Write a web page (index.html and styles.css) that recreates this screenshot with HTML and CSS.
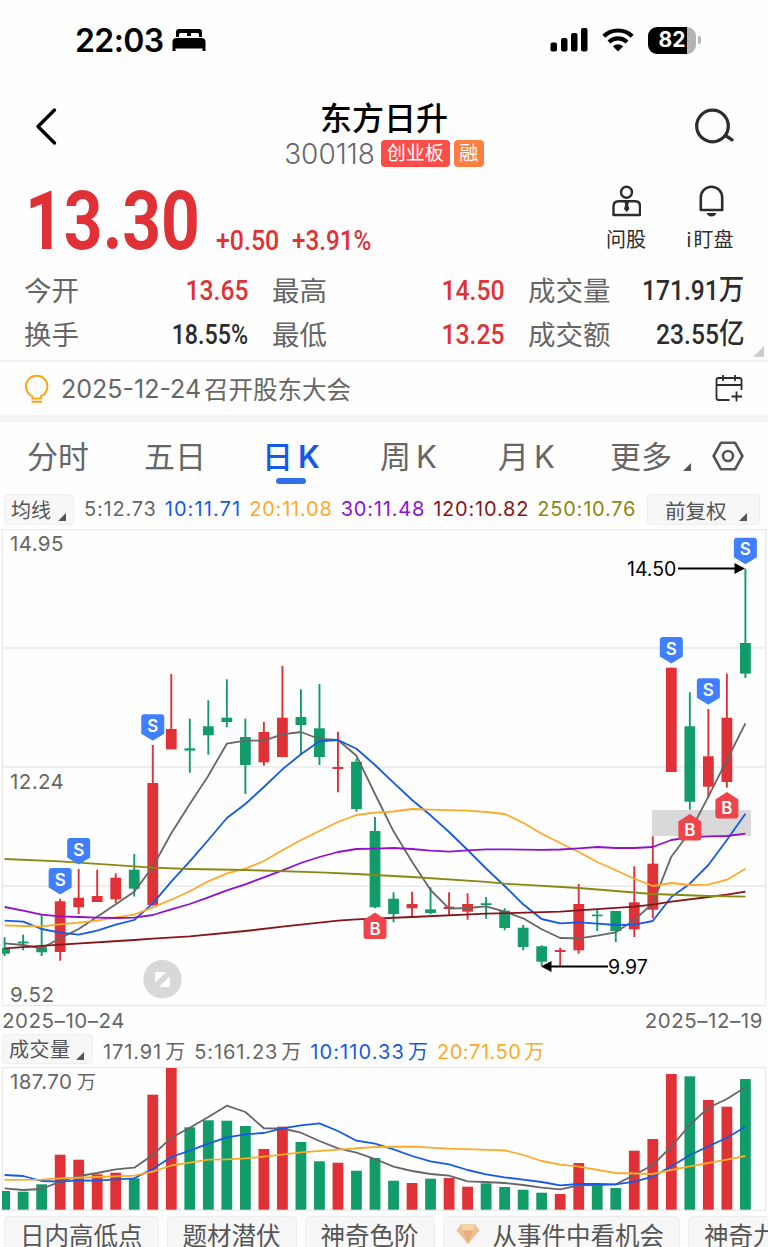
FILE: index.html
```html
<!DOCTYPE html>
<html lang="zh-CN">
<head>
  <meta charset="UTF-8" />
  <title>东方日升 300118</title>
  <meta name="viewport" content="width=device-width, initial-scale=1.0" />
  <link rel="stylesheet" href="styles.css">
</head>
<body>
  <div class="status-bar">
    <span class="time">22:03</span>
    <svg class="bed" width="34" height="24" viewBox="0 0 34 24">
      <path d="M4 9V4q0-3 3-3h20q3 0 3 3v5h-3V6.500q0-1.500-1.500-1.500h-6.500V8h-4V5H8.500q-1.500 0-1.500 1.500V9z" />
      <path d="M.5 23V14q0-4 4-4h25q4 0 4 4v9h-3v-2.500h-27V23z" />
    </svg>
    <div class="status-right">
      <svg width="38" height="24" viewBox="0 0 38 24">
        <rect x="0.500" y="14.500" width="6.500" height="9" rx="2" />
        <rect x="11" y="10" width="6.500" height="13.500" rx="2" />
        <rect x="21" y="5" width="6.500" height="18.500" rx="2" />
        <rect x="31" y="0" width="6.500" height="23.500" rx="2" />
      </svg>
      <svg class="wifi" width="32" height="24" viewBox="0 0 32 24">
        <path d="M1.800 8.300a20.300 20.300 0 0 1 28.400 0M7 14a12.800 12.800 0 0 1 18 0" fill="none" stroke="#000" stroke-width="4.200" />
        <path d="M16 23.500l-5.200-5.300q5.200-3.800 10.400 0z" />
      </svg>
      <div class="battery"><span>82</span></div>
      <i class="battery-tip"></i>
    </div>
  </div>

  <div class="header">
    <svg class="back" width="24" height="40" viewBox="0 0 24 40"><path d="M20.500 3L4 19.500 20.500 36" fill="none" stroke="#000" stroke-width="3.400" stroke-linecap="round" stroke-linejoin="round" /></svg>
    <div class="title">
      <h1>东方日升</h1>
      <div class="code-row">
        <span class="code">300118</span>
        <span class="tag tag-red">创业板</span>
        <span class="tag tag-orange">融</span>
      </div>
    </div>
    <svg class="search" width="40" height="36" viewBox="0 0 40 36"><g fill="none" stroke="#2d2d2d" stroke-width="3.300" stroke-linecap="round"><circle cx="18.500" cy="18" r="15.800" /><path d="M31.500 27.500l6.500 4.300" /></g></svg>
  </div>

  <div class="price-row">
    <div class="price">13.30</div>
    <div class="change change-value">+0.50</div>
    <div class="change change-pct">+3.91%</div>
    <div class="action action-ask">
      <svg width="30" height="32" viewBox="0 0 30 32"><g fill="none" stroke="#2d2d2d" stroke-width="2.400"><circle cx="15.500" cy="7.200" r="5.500" /><path d="M7.500 16.200h16.500q5 0 5 5v8.800h-26.500v-8.800q0-5 5-5z" stroke-linejoin="round" /></g><path d="M13.500 17h4.500l-.8 3 1.200 4-2.700 3-2.700-3 1.200-4z" fill="#2d2d2d" /></svg>
      <span>问股</span>
    </div>
    <div class="action action-watch">
      <svg width="30" height="32" viewBox="0 0 30 32"><path d="M5.800 25V12.500a10.700 10.700 0 0 1 21.400 0V25z" fill="none" stroke="#2d2d2d" stroke-width="2.600" stroke-linejoin="round" /><path d="M11.500 28h10q-1.500 3.600-5 3.600t-5-3.600z" fill="#2d2d2d" /></svg>
      <span><i>i</i>盯盘</span>
    </div>
  </div>

  <div class="quote">
    <span class="label">今开</span><span class="num red">13.65</span>
    <span class="label inset">最高</span><span class="num red">14.50</span>
    <span class="label inset">成交量</span><span class="num">171.91<b>万</b></span>
    <span class="label">换手</span><span class="num pct">18.55%</span>
    <span class="label inset">最低</span><span class="num red">13.25</span>
    <span class="label inset">成交额</span><span class="num">23.55<b>亿</b></span>
    <i class="corner"></i>
  </div>

  <div class="notice">
    <svg width="26" height="30" viewBox="0 0 26 30"><path d="M8.300 24.500v-2.300a10.700 10.700 0 1 1 8.800 0v2.300zM7.500 27.700h10.500" fill="none" stroke="#f9a411" stroke-width="1.900" stroke-linejoin="round" /></svg>
    <span class="notice-date">2025-12-24</span><span class="notice-text">召开股东大会</span>
    <svg class="calendar" width="28" height="28" viewBox="0 0 28 28"><path d="M14.500 25H3.500q-2 0-2-2V5q0-2 2-2h21q2 0 2 2v10M1.500 10h25M8 0v6M20 0v6M21.500 16.500v10M16.500 21.500h10.500" fill="none" stroke="#2d2d2d" stroke-width="1.800" /></svg>
  </div>

  <div class="tabs">
    <span>分时</span>
    <span>五日</span>
    <span class="active">日<em>K</em></span>
    <span>周<em>K</em></span>
    <span>月<em>K</em></span>
    <span class="more">更多</span>
    <i class="tri"></i>
    <svg width="32" height="30" viewBox="0 0 32 30"><g fill="none" stroke="#555" stroke-width="2.600" stroke-linejoin="round"><path d="M9 1.700h14L30.400 15 23 28.300H9L1.600 15z" /><circle cx="16" cy="15" r="5" /></g></svg>
  </div>

  <div class="ma-bar">
    <span class="pill pill-ma">均线<i class="tri"></i></span>
    <div class="ma-list">
      <span class="c5">5:12.73</span>
      <span class="c10">10:11.71</span>
      <span class="c20">20:11.08</span>
      <span class="c30">30:11.48</span>
      <span class="c120">120:10.82</span>
      <span class="c250">250:10.76</span>
    </div>
    <span class="pill pill-fq">前复权<i class="tri"></i></span>
  </div>

  <svg id="k-chart" class="chart" width="768" height="478" viewBox="0 529 768 478"></svg>
  <div class="dates"><span>2025–10–24</span><span>2025–12–19</span></div>

  <div class="vol-bar">
    <span class="pill pill-vol">成交量<i class="tri"></i></span>
    <span class="c5">171.91<u>万</u></span>
    <span class="c5">5:161.23<u>万</u></span>
    <span class="c10">10:110.33<u>万</u></span>
    <span class="c20">20:71.50<u>万</u></span>
  </div>
  <svg id="vol-chart" class="chart" width="768" height="145" viewBox="0 1067 768 145"></svg>

  <div class="chips">
    <span>日内高低点</span>
    <span>题材潜伏</span>
    <span>神奇色阶</span>
    <span class="chip-event"><svg width="24" height="20" viewBox="0 0 24 20"><path d="M5 0h14l4.500 6.500L12 20 .5 6.500z" fill="#efc092" /><path d="M5 0h14l-2 6.500H7z" fill="#f7d3ab" /><path d="M7 6.500h10L12 20z" fill="#e5ae7c" /></svg>从事件中看机会</span>
    <span>神奇九转</span>
  </div>

  <script>
    const RED = "#e03236", GREEN = "#129c6a";
    const COLORS = { ma5: "#666", ma10: "#145ae6", ma20: "#fdaa29", ma30: "#9011cc", ma120: "#861518", ma250: "#888911" };
    const x = i => 4.6 + i * 18.52;

    // direction, high, body top, body bottom, low
    const candles = [
      ["g", 937.3, 948, 953.7, 956], ["g", 934.7, 941.6, 943.4, 950.3], ["g", 915, 947.3, 952.3, 956],
      ["r", 898.7, 901.3, 952, 960.7], ["r", 869, 897.7, 907.3, 914], ["r", 869.7, 896, 902, 902],
      ["r", 873.3, 877.7, 899.3, 903], ["g", 854, 869.7, 888.7, 896.5], ["r", 745, 783, 905, 905.7],
      ["r", 674, 729, 749.3, 749.3], ["g", 718.7, 748.3, 750.6, 772.7], ["g", 700.3, 726.3, 735.3, 754.7],
      ["g", 679.3, 717.7, 722, 727.3], ["g", 718.7, 737, 765, 794], ["r", 722, 732, 762.3, 765.7],
      ["r", 666, 717.7, 757, 757], ["g", 689.3, 717, 725, 755], ["g", 684, 728.3, 757, 765],
      ["r", 731.7, 767, 769, 792.3], ["g", 758.3, 761.7, 809, 811.7], ["g", 817, 831, 907.3, 908.3],
      ["g", 892.3, 898.7, 914, 922.3], ["r", 891.7, 904, 908.3, 916.7], ["g", 887.3, 909.3, 913, 914.3],
      ["r", 892.3, 906.7, 909, 915.3], ["r", 893.3, 904, 911.7, 919.7], ["g", 897, 903.2, 905, 918.8],
      ["g", 908.3, 910.7, 928, 930.3], ["g", 925, 927.7, 947, 950.3], ["g", 945.3, 946.3, 961.7, 966],
      ["r", 947.7, 950, 952, 966], ["r", 884, 904, 950.3, 953.7], ["g", 909.3, 914.6, 916.2, 931],
      ["g", 911, 911, 931, 942], ["r", 866.3, 902.3, 929.3, 937], ["r", 836.3, 863.7, 909.7, 918.3],
      ["r", 667.7, 667.7, 772, 772], ["g", 692.3, 726.3, 801.7, 809.7], ["r", 709, 756.3, 786.7, 798],
      ["r", 673.7, 717.7, 782, 787.7], ["g", 568.7, 643, 673.7, 678]
    ];
    // [index, y] pairs are used where the line runs straight over several days
    const lines = {
      ma5: [943.3, 945, 948.3, 938.3, 929, 916.7, 904.3, 891.7, 866.7, 833.3, 804, 775.7, 743.7, 740.7, 740.7, 734.3, 732, 739, 740, 755.7, 794, 831.3, 861.7, 890, 908.7, 908, 906.3, 911.7, 918.3, 929.3, 938, 938.3, 935.7, 932.3, 920, 903.3, 856.7, 832, 796.7, 760, 723.3],
      ma10: [920.7, 921.7, 929, 932.7, 934.7, 930.7, 924.7, 920, 903.3, 881.7, 861.3, 840, 818, 804, 787, 769.3, 754.3, 741.3, 740, 748.7, 765, 782.7, 800, 815.3, 832, 850, 868.5, 886, 904.3, 919, 923.3, 922.3, 923.7, 925, 924.7, 921, 897, 883.7, 865, 840, 813.7],
      ma20: [925.3, 926, 926.3, 924.3, 922.7, 920.7, 917.3, 914.7, 907.3, 899.7, 891.3, 881.3, 873.3, 868.7, 861, 850.3, 840, 831, 822, 815, 812.7, 811.5, 809, 809.7, 810.2, 810.7, 812, 814, 822.7, 833.7, 843, 852, 862, 870.3, 878.7, 886, 883, 885, 884.7, 879.7, 868.7],
      ma30: [907, 910.7, 914.7, 916.3, 917, 917.7, 918, 917.7, 915, 909.3, 904, 897.3, 890.3, 884.3, 877.3, 870.3, 863, 857, 852, 849, 848.7, 848, 849, 850.7, 851.7, 850.3, 849.3, 849.3, 849.7, 849.8, 849.5, 848.3, 847, 848, 848, 847, 840, 837.3, 836.3, 836, 833.7],
      ma120: [[0, 948.3], [3, 944.7], [7, 940], [8, 938.7], [10, 936.3], [13, 931], [15, 926.7], [18, 920.7], [19, 919.3], [22, 917], [26, 913.7], [30, 911.7], [34, 906.7], [35, 904.7], [36, 901.7], [38, 897], [39, 894.7], [40, 891.7]],
      ma250: [[0, 859], [3, 861.3], [8, 867.7], [10, 869], [13, 870], [17, 872.3], [19, 874], [22, 877], [26, 881.9], [27, 883.7], [31, 888], [35, 894], [38, 896], [40, 896.7]]
    };
    const volTops = [1191, 1191.7, 1184.3, 1154.7, 1159.7, 1174.3, 1172.7, 1178.3, 1094.7, 1068, 1127.3, 1120.3, 1120.7, 1126, 1149, 1126.7, 1142, 1161.3, 1162.7, 1170.7, 1158, 1180.7, 1183, 1178.7, 1178, 1186.7, 1183.3, 1187, 1189.7, 1192.7, 1194, 1163, 1185, 1188, 1150.7, 1139, 1074, 1076.3, 1100, 1106.7, 1079];
    const volLines = {
      ma5: [1188.3, 1190, 1189, 1181.7, 1176, 1173, 1169.3, 1167.7, 1155, 1137.7, 1127.7, 1117, 1105.7, 1112, 1128.3, 1128.5, 1132.7, 1141, 1148.3, 1152.7, 1159, 1166.7, 1171, 1174, 1175.7, 1181.3, 1182, 1183, 1185, 1187.7, 1189.3, 1185.3, 1185, 1184.3, 1175, 1165, 1146.7, 1125, 1107.7, 1099, 1087.3],
      ma10: [1175, 1176, 1181, 1181.7, 1180.3, 1180.7, 1179.3, 1178.3, 1169, 1157, 1150.7, 1143.7, 1137.3, 1134.3, 1133, 1128.3, 1125.3, 1123.3, 1131, 1140.7, 1143.7, 1149.3, 1156, 1161.3, 1164.3, 1170, 1174.3, 1177.3, 1179.7, 1182, 1185.3, 1184, 1184, 1184.3, 1181.7, 1176.7, 1166.3, 1155.3, 1146.3, 1137.7, 1126.7],
      ma20: [[0, 1179.9], [2, 1179.7], [3, 1178.3], [5, 1177], [7, 1175.7], [8, 1171.7], [9, 1165.5], [10, 1162.7], [11, 1159.7], [12, 1159.3], [13, 1158.3], [14, 1156.7], [15, 1154.7], [16, 1152.3], [18, 1149.7], [20, 1147], [22, 1146.7], [24, 1148.7], [27, 1150.3], [28, 1155], [29, 1161], [30, 1164.7], [31, 1166.7], [33, 1173], [35, 1174], [36, 1170], [37, 1166.3], [38, 1163], [39, 1159.7], [40, 1156]]
    };

    const grid = (ys, top, bottom) =>
      `<path d="M2.500 ${top}V${bottom}M765.500 ${top}V${bottom}${ys.map(y => `M2 ${y}H766`).join("")}" class="grid" />`;
    const polyline = (name, data) => {
      const pts = data.map((p, i) => Array.isArray(p) ? `${x(p[0])},${p[1]}` : `${x(i)},${p}`);
      return `<polyline points="${pts.join(" ")}" stroke="${COLORS[name]}" class="line" />`;
    };
    const bar = (i, top, bottom, w, fill) => {
      const left = Math.max(x(i) - w / 2, 2);
      return `<rect x="${left}" y="${top}" width="${x(i) + w / 2 - left}" height="${bottom - top}" fill="${fill}" />`;
    };
    const sell = (i, y) => `<g transform="translate(${x(i)} ${y})"><path d="M-8.500 0H8.500Q11.500 0 11.500 3V19.500L0 26.500-11.500 19.500V3Q-11.500 0-8.500 0z" fill="#407fff" /><text y="17.500" class="mark">S</text></g>`;
    const buy = (i, y) => `<g transform="translate(${x(i)} ${y})"><path d="M0 0L11.500 7.500V23.500Q11.500 26.500 8.500 26.500H-8.500Q-11.500 26.500-11.500 23.500V7.500z" fill="#ed454b" /><text y="22" class="mark">B</text></g>`;

    let k = grid([529.5, 648, 767, 886, 1005.5], 529, 1006);
    k += `<rect x="652" y="810" width="99" height="26" fill="#d9d9d9" />`;
    candles.forEach(([dir, high, top, bottom, low], i) => {
      const fill = dir === "r" ? RED : GREEN;
      k += bar(i, high, low, 1.9, fill) + bar(i, top, bottom, 10.8, fill);
    });
    for (const name in lines) k += polyline(name, lines[name]);
    k += sell(3, 868) + sell(4, 838) + sell(8, 714.3) + sell(36, 637) + sell(38, 678.3) + sell(40, 537.7);
    k += buy(20, 912.5) + buy(37, 814) + buy(39, 792);
    k += `<text x="10" y="551" class="axis">14.95</text><text x="10" y="789" class="axis">12.24</text><text x="10" y="1002" class="axis">9.52</text>`;
    k += `<path d="M678 568.500H737M550 966.500H608" stroke="#000" stroke-width="2" /><path d="M745 568.500l-10.500-5.500v11zM541 966.500l10.500-5.500v11z" />`;
    k += `<text x="627" y="576" class="peak">14.50</text><text x="608" y="974" class="peak">9.97</text>`;
    k += `<circle cx="162.500" cy="979.300" r="19.200" fill="#d8d8d8" /><path d="M155.500 982V973.500Q155.500 972.500 156.500 972.500H165zM169.500 977V985.500Q169.500 986.500 168.500 986.500H160z" fill="#fff" stroke="#fff" stroke-linejoin="round" />`;
    document.getElementById("k-chart").innerHTML = k;

    let v = grid([1067.5, 1210.3], 1067, 1211);
    volTops.forEach((top, i) => { v += bar(i, top, 1209.7, 10.8, candles[i][0] === "r" ? RED : GREEN); });
    for (const name in volLines) v += polyline(name, volLines[name]);
    v += `<text x="10" y="1089" class="axis">187.70</text><text x="77" y="1089" class="axis cjk">万</text>`;
    document.getElementById("vol-chart").innerHTML = v;
  </script>
</body>
</html>
```
FILE: styles.css
```css
* {
  box-sizing: border-box;
  margin: 0;
  padding: 0;
}
body {
  width: 768px;
  height: 1247px;
  overflow: hidden;
  background: #fefefe;
  color: #2d2d2d;
  font-family: Inter, "Noto Sans CJK SC", sans-serif;
  white-space: nowrap;
}
svg {
  display: block;
  flex: none;
}
i, em {
  font-style: normal;
}
u {
  text-decoration: none;
}

/* status bar */
.status-bar {
  height: 80px;
  display: flex;
  align-items: center;
  padding: 0 67px 0 75px;
}
.time {
  width: 97px;
  font-size: 32px;
  font-weight: 600;
  letter-spacing: -0.6px;
  color: #000;
}
.status-right {
  margin-left: auto;
  display: flex;
  align-items: center;
}
.wifi {
  margin: 0 14px 0 14px;
}
.battery {
  width: 48px;
  height: 27px;
  border-radius: 9px;
  background: linear-gradient(90deg, #000 82%, #b3b3b3 82%);
  color: #fff;
  font-size: 21px;
  font-weight: 700;
  line-height: 26px;
  text-align: center;
}
.battery-tip {
  width: 3px;
  height: 8px;
  margin-left: 2px;
  border-radius: 0 3px 3px 0;
  background: #b3b3b3;
}

/* header */
.header {
  height: 95px;
  display: flex;
  padding: 0 34px;
}
.back {
  margin-top: 27px;
}
.title {
  flex: 1;
  text-align: center;
  padding-top: 16px;
}
.title h1 {
  height: 44px;
  padding-left: 16px;
  font-size: 32px;
  font-weight: 500;
  line-height: 46px;
  color: #000;
}
.code-row {
  display: flex;
  justify-content: center;
  align-items: center;
  height: 27px;
  padding-left: 16px;
}
.code {
  font-size: 28px;
  font-weight: 300;
  color: #666;
  margin-right: 6px;
}
.tag {
  height: 27px;
  padding: 0 5px;
  border-radius: 4px;
  color: #fff;
  font-size: 19px;
  line-height: 28px;
}
.tag-red {
  width: 69px;
  margin-right: 4px;
  background: #fc4d49;
}
.tag-orange {
  width: 30px;
  background: #ff7f41;
}
.search {
  margin-top: 28px;
}

/* price */
.price-row {
  height: 87px;
  display: flex;
  padding-left: 25px;
  color: #e03236;
  font-family: Roboto, sans-serif;
  font-weight: 700;
}
.price {
  width: 191px;
  font-size: 82px;
  line-height: 93px;
  transform: scaleX(0.825);
  transform-origin: 0 0;
}
.change {
  width: 76px;
  padding-top: 51px;
  font-size: 28px;
  line-height: 30px;
  font-weight: 500;
  transform: scaleX(0.89);
  transform-origin: 0 0;
}
.change-pct {
  width: 299px;
  transform: scaleX(0.865);
}
.action {
  display: flex;
  flex-direction: column;
  align-items: center;
  padding-top: 10px;
  color: #2d2d2d;
  font: 400 20px/32px Inter, "Noto Sans CJK SC", sans-serif;
}
.action-ask {
  width: 70px;
}
.action-watch {
  width: 98px;
}
.action span {
  margin-top: 7px;
}
.action i {
  margin-right: 2px;
}

/* quote grid */
.quote {
  position: relative;
  height: 100px;
  display: grid;
  grid-template-columns: 100px 124px 136px 120px 120px 120px;
  grid-template-rows: 44px 44px;
  padding: 7px 24px 0 24px;
  line-height: 44px;
  border-bottom: 2px solid #f1f1f1;
}
.label {
  font-size: 27.500px;
  color: #666;
}
.inset {
  padding-left: 24px;
}
.num {
  justify-self: end;
  font-family: Roboto, "Noto Sans CJK SC", sans-serif;
  font-size: 28px;
  font-weight: 500;
  transform: scaleX(0.88);
  transform-origin: 100% 0;
}
.pct {
  transform: scaleX(0.83);
}
.num b {
  display: inline-block;
  font-size: 29px;
  font-weight: 500;
  line-height: 30px;
}
.red {
  color: #e03236;
}
.corner {
  position: absolute;
  right: 4px;
  bottom: 3px;
  border-left: 11px solid transparent;
  border-bottom: 11px solid #ccc;
}

/* notice */
.notice {
  height: 60px;
  display: flex;
  align-items: center;
  padding: 0 25px 0 24px;
  border-bottom: 7px solid #f4f4f4;
  color: #666;
}
.notice-date {
  margin-left: 11px;
  width: 143px;
  font-size: 25px;
}
.notice-text {
  font-size: 24.5px;
}
.calendar {
  margin-left: auto;
}

/* tabs */
.tabs {
  height: 71px;
  display: flex;
  align-items: center;
  padding: 0 0 4px 27px;
  font-size: 31px;
  color: #666;
}
.tabs span {
  width: 118px;
  margin-top: -2px;
}
.tabs span:first-child {
  width: 117px;
}
.tabs em {
  margin-left: 5px;
  font-size: 31px;
}
.tabs .active {
  position: relative;
  color: #145ae6;
  font-weight: 500;
}
.active em {
  font-weight: 600;
}
.active::after {
  content: "";
  position: absolute;
  left: 14px;
  bottom: -7px;
  width: 30px;
  height: 6px;
  border-radius: 3px;
  background: #3170ea;
}
.tabs .more {
  width: 73px;
  margin-left: -6px;
}
.tri {
  width: 0;
  border-left: 8px solid transparent;
  border-bottom: 8px solid #555;
}
.tabs .tri {
  margin: 22px 21px 0 0;
}

/* moving average bar */
.pill {
  display: flex;
  align-items: center;
  border: 1px solid #eee;
  border-radius: 4px;
  background: #f7f7f7;
  color: #555;
}
.pill .tri {
  margin-top: 14px;
}
.ma-bar {
  height: 36px;
  display: flex;
  align-items: center;
  padding: 0 8px 3px 4px;
}
.pill-ma {
  width: 70px;
  height: 31px;
  padding-left: 6px;
  font-size: 20px;
}
.pill-ma .tri {
  margin-left: 7px;
}
.ma-list {
  display: flex;
  gap: 8px;
  margin: -1px 0 0 10px;
  font-size: 20px;
  letter-spacing: 0.8px;
}
.ma-list .c10 {
  letter-spacing: 1.1px;
}
.pill-fq {
  width: 113px;
  height: 31px;
  margin-left: auto;
  padding-left: 17px;
  font-size: 20.500px;
}
.pill-fq .tri {
  margin-left: 12px;
}
.c5 {
  color: #666;
}
.c10 {
  color: #145ae6;
}
.c20 {
  color: #fdaa29;
}
.c30 {
  color: #9011cc;
}
.c120 {
  color: #861518;
}
.c250 {
  color: #888911;
}

/* charts */
.grid {
  fill: none;
  stroke: #e9e9e9;
  stroke-width: 1.300;
}
.line {
  fill: none;
  stroke-width: 1.800;
  stroke-linejoin: round;
}
.mark {
  fill: #fff;
  font-size: 17px;
  font-weight: 600;
  text-anchor: middle;
}
.axis {
  fill: #666;
  font-size: 20.500px;
  letter-spacing: 0.4px;
}
.peak {
  fill: #000;
  font-size: 19.500px;
}
.cjk {
  font-size: 19px;
}
.dates {
  height: 28px;
  display: flex;
  justify-content: space-between;
  padding: 0 5px 0 2px;
  font-size: 20.500px;
  line-height: 28px;
  letter-spacing: 0.55px;
  color: #666;
}

/* volume */
.vol-bar {
  height: 32px;
  display: flex;
  align-items: center;
  gap: 9px;
  padding: 0 0 2px 2px;
  font-size: 20px;
  letter-spacing: 0.9px;
}
.vol-bar .c10 {
  letter-spacing: 1.1px;
}
.vol-bar .c20 {
  letter-spacing: 0.500px;
}
.vol-bar u {
  margin-left: 3px;
  font-size: 20px;
  letter-spacing: 0;
}
.pill-vol {
  width: 91px;
  height: 30px;
  padding-left: 6px;
  margin: -3px 1px 0 0;
  letter-spacing: 0.5px;
}
.pill-vol .tri {
  margin-left: 5px;
}

/* bottom chips */
.chips {
  height: 40px;
  display: flex;
  gap: 8px;
  padding: 4px 0 0 4px;
}
.chips span {
  flex: none;
  display: flex;
  align-items: center;
  height: 38px;
  padding: 0 15px 2px;
  border: 1px solid #eee;
  border-radius: 4px;
  background: #f7f7f7;
  font-size: 24.500px;
  color: #555;
}
.chips .chip-event {
  padding-left: 14px;
}
.chips svg {
  margin: 0 13px 0 -2px;
}
```
